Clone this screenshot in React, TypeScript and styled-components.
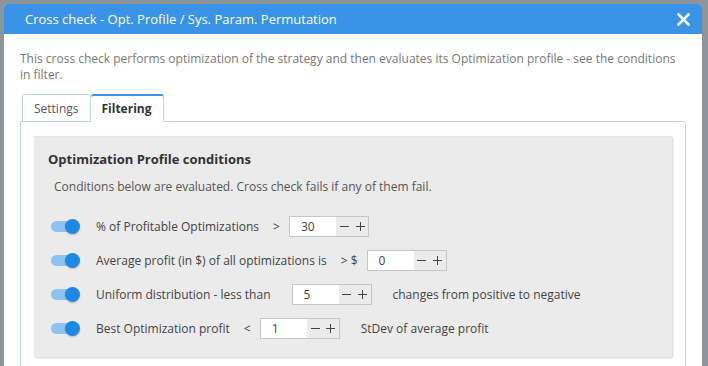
import styled, { createGlobalStyle } from "styled-components";

const GlobalStyle = createGlobalStyle`
    html, body {
        margin: 0;
        padding: 0;
        background: #8d949a;
        font-family: "Open Sans", "Liberation Sans", sans-serif;
        overflow: hidden;
    }
`

type Condition = {
    label: string
    op?: string
    value: string
    suffix?: string
    spinGap: number
}

const conditions: Condition[] = [
    { label: '% of Profitable Optimizations', op: '>', value: '30', spinGap: 0 },
    { label: 'Average profit (in $) of all optimizations is', op: '> $', value: '0', spinGap: 0 },
    { label: 'Uniform distribution - less than', value: '5', suffix: 'changes from positive to negative', spinGap: 21 },
    { label: 'Best Optimization profit', op: '<', value: '1', suffix: 'StDev of average profit', spinGap: 0 },
]

const MinusIcon = () => (
    <svg width="9" height="9" viewBox="0 0 9 9">
        <path d="M0 4.5 H9" stroke="#444" strokeWidth="1" />
    </svg>
)

const PlusIcon = () => (
    <svg width="9" height="9" viewBox="0 0 9 9">
        <path d="M0 4.5 H9 M4.5 0 V9" stroke="#444" strokeWidth="1" />
    </svg>
)

const App = () => {
    return (
        <>
            <GlobalStyle />
            <Modal>
                <Header>
                    <Title>Cross check - Opt. Profile / Sys. Param. Permutation</Title>
                    <CloseBtn>
                        <svg width="13" height="13" viewBox="0 0 13 13">
                            <path d="M1.5 1.5 L11.5 11.5 M11.5 1.5 L1.5 11.5" stroke="#fff" strokeWidth="2.6" strokeLinecap="square" />
                        </svg>
                    </CloseBtn>
                </Header>
                <Body>
                    <Description>
                        This cross check performs optimization of the strategy and then evaluates its Optimization profile - see the conditions in filter.
                    </Description>
                    <Tabs>
                        <Tab>Settings</Tab>
                        <Tab $active>Filtering</Tab>
                    </Tabs>
                    <TabPanel>
                        <ConditionsBox>
                            <BoxTitle>Optimization Profile conditions</BoxTitle>
                            <BoxNote>Conditions below are evaluated. Cross check fails if any of them fail.</BoxNote>
                            {conditions.map(item => (
                                <Row key={item.label}>
                                    <Toggle><span /></Toggle>
                                    <Label>{item.label}</Label>
                                    {item.op && <Op>{item.op}</Op>}
                                    <Spin $gap={item.spinGap}>
                                        <SpinValue>{item.value}</SpinValue>
                                        <SpinBtn><MinusIcon /></SpinBtn>
                                        <SpinBtn><PlusIcon /></SpinBtn>
                                    </Spin>
                                    {item.suffix && <Suffix>{item.suffix}</Suffix>}
                                </Row>
                            ))}
                        </ConditionsBox>
                    </TabPanel>
                </Body>
            </Modal>
        </>
    )
}
export default App

const Modal = styled.div`
    margin: 4px 6px 0 4px;
    background: #fff;
    border-radius: 4px 4px 0 0;
    height: 400px;
`

const Header = styled.div`
    height: 30px;
    background: #3993e6;
    border-radius: 4px 4px 0 0;
    display: flex;
    align-items: center;
    justify-content: space-between;
    padding: 0 12px 0 21px;
`

const Title = styled.div`
    color: #fff;
    font-size: 13px;
`

const CloseBtn = styled.div`
    display: flex;
    align-items: center;
    margin-top: 1px;
`

const Body = styled.div`
    padding: 17px 16px 0 16px;
`

const Description = styled.div`
    font-size: 12px;
    line-height: 16px;
    color: #777;
    padding-right: 4px;
`

const Tabs = styled.div`
    display: flex;
    margin-top: 11px;
    padding-left: 2px;
    position: relative;
    z-index: 1;
    margin-bottom: -1px;
`

const Tab = styled.div<{ $active?: boolean }>`
    height: 28px;
    box-sizing: border-box;
    display: flex;
    align-items: center;
    padding: 0 ${p => p.$active ? '11px' : '11px'};
    font-size: 12px;
    color: ${p => p.$active ? '#333' : '#555'};
    font-weight: ${p => p.$active ? 700 : 400};
    background: #fff;
    border: 1px solid #b9d7f0;
    border-top: ${p => p.$active ? '2px solid #3993e6' : '1px solid #b9d7f0'};
    border-bottom: ${p => p.$active ? '1px solid #fff' : '1px solid #b9d7f0'};
    border-left: ${p => p.$active ? 'none' : '1px solid #b9d7f0'};
    border-radius: 3px 3px 0 0;
`

const TabPanel = styled.div`
    border: 1px solid #b9d7f0;
    border-radius: 0 3px 0 0;
    padding: 14px 13px 20px 13px;
`

const ConditionsBox = styled.div`
    background: #ebebeb;
    border-top: 1px dotted #e2e2e2;
    box-shadow: 1px 1px 2px rgba(0, 0, 0, 0.18);
    padding: 13px 14px 12px 14px;
`

const BoxTitle = styled.div`
    font-size: 13px;
    font-weight: 700;
    color: #333;
    line-height: 18px;
`

const BoxNote = styled.div`
    font-size: 12px;
    color: #555;
    margin: 10px 0 14px 6px;
    line-height: 17px;
`

const Row = styled.div`
    display: flex;
    align-items: center;
    height: 34px;
    font-size: 12px;
    color: #444;
`

const Toggle = styled.div`
    position: relative;
    width: 29px;
    height: 11px;
    margin-left: 3px;
    margin-right: 16px;

    &::before {
        content: "";
        position: absolute;
        left: 0;
        top: 0;
        width: 26px;
        height: 11px;
        border-radius: 6px;
        background: #8ec3f1;
    }

    span {
        position: absolute;
        left: 14px;
        top: -2px;
        width: 15px;
        height: 15px;
        border-radius: 50%;
        background: #1e88e5;
        box-shadow: 0 1px 2px rgba(0, 0, 0, 0.2);
    }
`

const Label = styled.span`
    margin-right: 14px;
`

const Op = styled.span`
    margin-right: 9px;
`

const Spin = styled.div<{ $gap: number }>`
    display: flex;
    align-items: stretch;
    height: 21px;
    width: 80px;
    box-sizing: border-box;
    border: 1px solid #c6c6c6;
    margin-left: ${p => p.$gap ? `${p.$gap - 14}px` : '0'};
`

const SpinValue = styled.div`
    width: 47px;
    background: #fff;
    padding-left: 11px;
    box-sizing: border-box;
    display: flex;
    align-items: center;
    color: #444;
`

const SpinBtn = styled.div`
    width: 16px;
    display: flex;
    align-items: center;
    justify-content: center;
`

const Suffix = styled.span`
    margin-left: 21px;
`
